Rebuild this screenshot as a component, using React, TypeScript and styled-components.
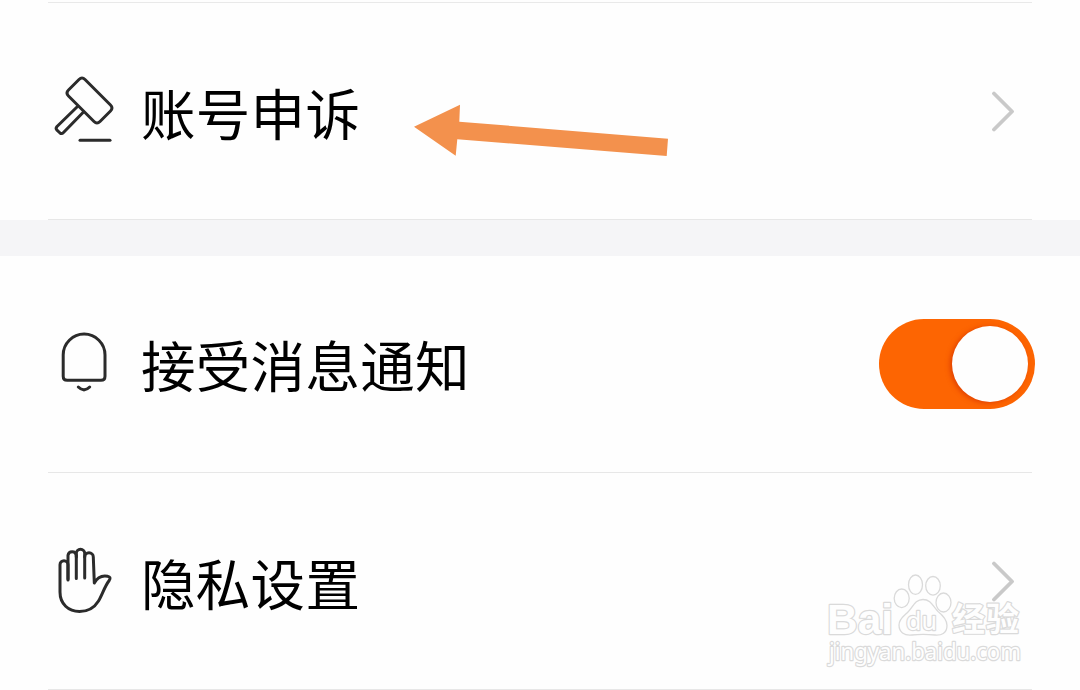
import type { ReactNode } from 'react';
import styled, { createGlobalStyle } from 'styled-components';

const GlobalStyle = createGlobalStyle`
  * {
    box-sizing: border-box;
  }
  body {
    margin: 0;
    background: #fefefe;
    font-family: 'Noto Sans CJK SC', sans-serif;
    overflow: hidden;
  }
`;

const Page = styled.main`
  position: relative;
  width: 1080px;
  height: 690px;
  padding-top: 2px;
  overflow: hidden;
`;

const Section = styled.section<{ $topLine?: boolean }>`
  padding: 0 48px;

  &::before {
    content: '';
    display: ${({ $topLine }) => ($topLine ? 'block' : 'none')};
    height: 1px;
    background: #e9e9e9;
  }
`;

const SectionGap = styled.div`
  height: 36px;
  background: #f5f5f7;
`;

const Row = styled.div`
  display: flex;
  align-items: center;
  height: 217px;
  border-bottom: 1px solid #e7e7e7;
`;

const Label = styled.span<{ $shift?: number }>`
  flex: 1;
  margin-left: 21px;
  padding-top: ${({ $shift }) => $shift ?? 0}px;
  color: #000;
  font-size: 54.5px;
  letter-spacing: 0.3px;
  line-height: 80px;
  white-space: nowrap;
`;

const IconSvg = styled.svg`
  flex: none;
  width: 72px;
  height: 72px;
  fill: none;
  stroke: #2b2b2b;
  stroke-width: 3;
  stroke-linecap: round;
  stroke-linejoin: round;
`;

const ChevronSvg = styled.svg`
  flex: none;
  width: 24px;
  height: 42px;
  margin-right: 17px;
  fill: none;
  stroke: #c9c9c9;
  stroke-width: 3.8;
  stroke-linecap: round;
  stroke-linejoin: round;
`;

const Switch = styled.button`
  display: flex;
  flex: none;
  align-items: center;
  justify-content: flex-end;
  width: 156px;
  height: 90px;
  margin-right: -3px;
  padding: 0 7px 0 0;
  border: 0;
  border-radius: 45px;
  background: #fd6502;
`;

const Knob = styled.span`
  width: 76px;
  height: 76px;
  border-radius: 50%;
  background: #fefefe;
  box-shadow: -2px 1px 5px rgba(205, 40, 0, 0.6);
`;

const PointerArrow = styled.svg`
  position: absolute;
  top: 100px;
  left: 410px;
  width: 262px;
  height: 60px;
  fill: #f3914d;
`;

const Watermark = styled.svg`
  position: absolute;
  top: 570px;
  left: 820px;
  width: 210px;
  height: 100px;
  fill: #fefefe;
  stroke: #dadada;
  stroke-width: 1.3;
  stroke-linejoin: round;

  text {
    stroke-width: 2.4;
    paint-order: stroke;
  }
  .bold {
    font-family: 'Liberation Sans', sans-serif;
    font-weight: bold;
  }
  .cjk {
    font-family: 'Noto Sans CJK SC', sans-serif;
    font-weight: bold;
  }
  .light {
    font-family: 'Noto Sans', sans-serif;
  }
`;

const GavelIcon = () => (
  <IconSvg viewBox="0 0 72 72">
    <path d="M31 4.500 20.500 15Q17.500 18 20.500 21L46 46.500Q49 49.500 52 46.500L62.500 36Q65.500 33 62.500 30L37 4.500Q34 1.500 31 4.500Z" />
    <path d="M29 32 9 51.500Q7.300 53.500 9 55.200L12 58Q13.800 59.300 15.500 57.500L35.500 37" />
    <path d="M32 65.300h30" />
  </IconSvg>
);

const BellIcon = () => (
  <IconSvg viewBox="0 0 72 72">
    <path d="M15.200 27a20.900 20.900 0 0 1 41.800 0V48.300q0 4-4 4H19.200q-4 0-4-4Z" />
    <path d="M30.300 59q5.700 5.600 11.400 0" />
  </IconSvg>
);

const HandIcon = () => (
  <IconSvg viewBox="0 0 72 72">
    <path d="M20 35V19.700a4 4 0 0 0-8 0V47C12 59 20.500 66.500 31.500 66.500c9 0 15-4 19-10.500 4-6.500 6-14.500 10.700-20.500Q63.500 32 59.500 31.200C53 30 49 33 46.300 38L45.300 12a4.300 4.300 0 0 0-8.600 0" />
    <path d="M20 34V10.300a4.200 4.200 0 0 1 8.300 0V33.500" />
    <path d="M28.300 12V8.500a4.200 4.200 0 0 1 8.400 0V33" />
  </IconSvg>
);

const Chevron = () => (
  <ChevronSvg viewBox="0 0 24 42">
    <path d="M3 3.500 21 21.500 3 39.500" />
  </ChevronSvg>
);

interface SettingRowProps {
  icon: ReactNode;
  label: string;
  shift?: number;
  children: ReactNode;
}

const SettingRow = ({ icon, label, shift, children }: SettingRowProps) => (
  <Row>
    {icon}
    <Label $shift={shift}>{label}</Label>
    {children}
  </Row>
);

const App = () => {
  return (
    <Page>
      <GlobalStyle />
      <Section $topLine>
        <SettingRow icon={<GavelIcon />} label="账号申诉" shift={1}>
          <Chevron />
        </SettingRow>
      </Section>
      <SectionGap />
      <Section>
        <SettingRow icon={<BellIcon />} label="接受消息通知">
          <Switch type="button" role="switch" aria-checked="true">
            <Knob />
          </Switch>
        </SettingRow>
        <SettingRow icon={<HandIcon />} label="隐私设置" shift={1}>
          <Chevron />
        </SettingRow>
      </Section>
      <PointerArrow viewBox="0 0 262 60">
        <path d="M4 26.700 50 4.700 49.300 21.700 258 38.700 256.700 56 47.300 39.300 45.700 55.700Z" />
      </PointerArrow>
      <Watermark viewBox="0 0 210 100">
        <text className="bold" x="7" y="63.500" fontSize="42" textLength="66" lengthAdjust="spacingAndGlyphs">
          Bai
        </text>
        <ellipse cx="81.700" cy="28.300" rx="7.500" ry="9.300" />
        <ellipse cx="95.500" cy="14.700" rx="7" ry="9.700" />
        <ellipse cx="113" cy="15.800" rx="7.300" ry="9.300" />
        <ellipse cx="123.500" cy="32.500" rx="7.500" ry="9.500" />
        <path d="M103 29.500c8 0 10 7 15 12 5 4 9 8 9 14 0 8-6 10-12 9.500-8-.700-16-.700-23 0-8 .800-13-3-13-10 0-6 5-9 9-13 5-5 7-12.500 15-12.500Z" />
        <text className="light" x="86" y="60" fontSize="26" textLength="31" lengthAdjust="spacingAndGlyphs">
          du
        </text>
        <text className="cjk" x="132" y="61" fontSize="33" textLength="67">
          经验
        </text>
        <text className="light" x="9" y="90" fontSize="23" textLength="192" lengthAdjust="spacingAndGlyphs">
          jingyan.baidu.com
        </text>
      </Watermark>
    </Page>
  );
};

export default App;
